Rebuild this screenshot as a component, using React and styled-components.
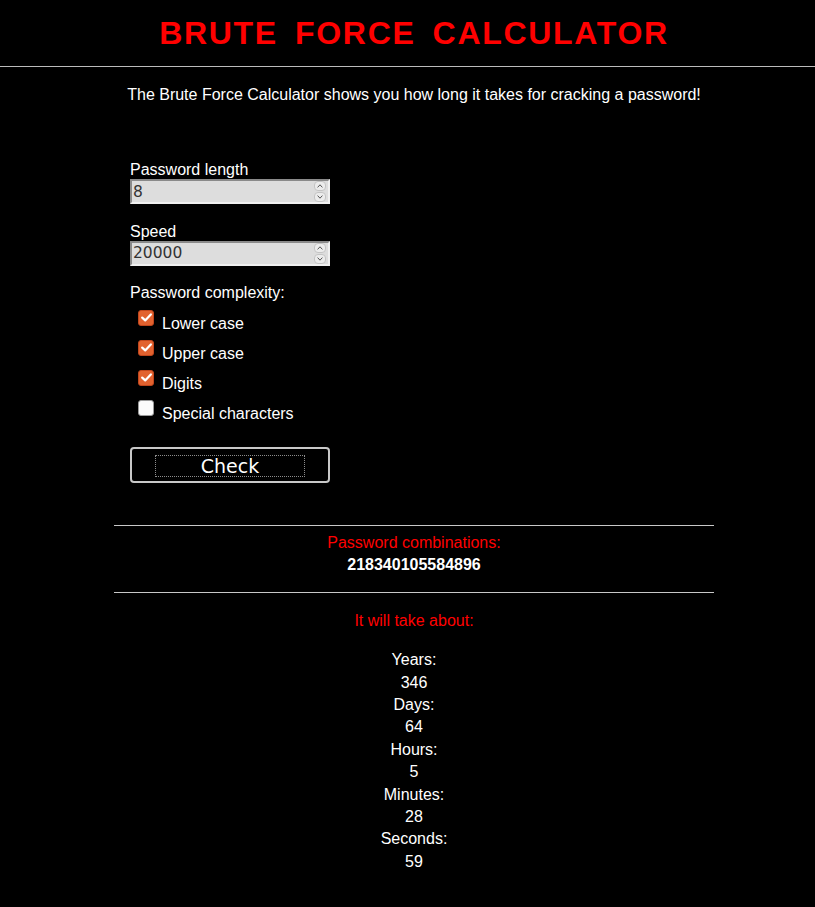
import React, { useState } from "react";
import styled, { createGlobalStyle } from "styled-components";

const GlobalStyle = createGlobalStyle`
  html, body {
    margin: 0;
    padding: 0;
    background: #000;
  }
  body {
    font-family: "Liberation Sans", Arial, sans-serif;
    font-size: 16px;
    color: #fff;
  }
`;

const Header = styled.header`
  padding: 13px 0 13px 13px;
  border-bottom: 1px solid #bbb;
`;

const Title = styled.h1`
  margin: 0;
  font-size: 32px;
  line-height: 40px;
  font-weight: bold;
  letter-spacing: 1.7px;
  word-spacing: 6.5px;
  color: #ff0000;
  text-align: center;
`;

const Page = styled.div`
  padding-left: 13px;
`;

const Container = styled.main`
  width: 600px;
  margin: 0 auto;
`;

const Intro = styled.p`
  margin: 19px 0 0;
  line-height: 18px;
  text-align: center;
`;

const Form = styled.form`
  padding: 57px 16px 0;
  display: flex;
  flex-direction: column;
  align-items: flex-start;
`;

const Field = styled.label`
  display: flex;
  flex-direction: column;
  line-height: 18px;
  margin-bottom: 18.5px;
`;

const NumberBox = styled.div`
  width: 200px;
  height: 25px;
  box-sizing: border-box;
  display: flex;
  align-items: center;
  background: #dddddd;
  border: 2px solid;
  border-color: #8a8a8a #f0f0f0 #f0f0f0 #8a8a8a;
`;

const NumberInput = styled.input`
  flex: 1;
  min-width: 0;
  border: 0;
  outline: none;
  background: transparent;
  font-family: "DejaVu Sans", sans-serif;
  font-size: 15.5px;
  color: #333;
  padding: 0 1px;
  height: 100%;
`;

const Spinner = styled.div`
  display: flex;
  flex-direction: column;
  gap: 1px;
  margin-right: 2px;
`;

const SpinButton = styled.span`
  width: 12px;
  height: 10px;
  box-sizing: border-box;
  border: 1px solid #c4c4c4;
  border-radius: 4px;
  background: #ececec;
  display: flex;
  align-items: center;
  justify-content: center;
`;

const GroupLabel = styled.div`
  line-height: 18px;
  margin-bottom: 4px;
`;

const OptionRow = styled.label`
  display: flex;
  align-items: flex-start;
  height: 30px;
  padding-left: 8px;
  cursor: pointer;
`;

const Box = styled.span`
  width: 16px;
  height: 16px;
  box-sizing: border-box;
  margin-top: 3.5px;
  margin-right: 8px;
  border-radius: 3px;
  border: 1px solid ${({ checked }) => (checked ? "#c0461c" : "#9a9a9a")};
  background: ${({ checked }) => (checked ? "#e2622f" : "#fbfbfb")};
  display: flex;
  align-items: center;
  justify-content: center;
`;

const OptionText = styled.span`
  padding-top: 9px;
  line-height: 18px;
`;

const CheckButton = styled.button`
  margin-top: 21px;
  width: 200px;
  height: 36px;
  box-sizing: border-box;
  background: #000;
  color: #fff;
  border: 2px solid #c8c8c8;
  border-radius: 4px;
  padding: 6px 0;
  font-family: "DejaVu Sans", sans-serif;
  font-size: 19px;
  display: flex;
  justify-content: center;
  cursor: pointer;
`;

const FocusRing = styled.span`
  width: 150px;
  height: 22px;
  box-sizing: border-box;
  border: 1px dotted #8c8c8c;
  line-height: 20px;
`;

const Divider = styled.hr`
  margin: ${({ top }) => top || "0"} 0 0;
  border: 0;
  border-top: 1px solid #c8c8c8;
`;

const Result = styled.section`
  text-align: center;
  line-height: 22.4px;
  padding: ${({ pad }) => pad || "6px 0 15px"};
`;

const Heading = styled.div`
  color: #ff0000;
  margin-bottom: ${({ gap }) => gap || "0"};
`;

const Total = styled.div`
  font-weight: bold;
`;

const Check = () => (
  <svg width="11" height="9" viewBox="0 0 11 9">
    <path d="M1.2 4.6 L4.2 7.4 L9.8 1.4" fill="none" stroke="#fff" strokeWidth="2.2" strokeLinecap="round" strokeLinejoin="round" />
  </svg>
);

const Chevron = ({ up }) => (
  <svg width="6" height="4" viewBox="0 0 6 4">
    <path d={up ? "M0.6 3.4 L3 0.8 L5.4 3.4" : "M0.6 0.6 L3 3.2 L5.4 0.6"} fill="none" stroke="#555" strokeWidth="1" />
  </svg>
);

const NumberField = ({ label, value, onChange }) => (
  <Field>
    {label}
    <NumberBox>
      <NumberInput type="text" value={value} onChange={(e) => onChange(e.target.value)} />
      <Spinner>
        <SpinButton>
          <Chevron up />
        </SpinButton>
        <SpinButton>
          <Chevron />
        </SpinButton>
      </Spinner>
    </NumberBox>
  </Field>
);

const OPTIONS = [
  { key: "lower", label: "Lower case" },
  { key: "upper", label: "Upper case" },
  { key: "digits", label: "Digits" },
  { key: "special", label: "Special characters" },
];

const TIMES = [
  ["Years", 346],
  ["Days", 64],
  ["Hours", 5],
  ["Minutes", 28],
  ["Seconds", 59],
];

export default function App() {
  const [length, setLength] = useState("8");
  const [speed, setSpeed] = useState("20000");
  const [checked, setChecked] = useState({ lower: true, upper: true, digits: true, special: false });

  const toggle = (key) => setChecked((c) => ({ ...c, [key]: !c[key] }));

  return (
    <>
      <GlobalStyle />
      <Header>
        <Title>BRUTE FORCE CALCULATOR</Title>
      </Header>
      <Page>
        <Container>
          <Intro>The Brute Force Calculator shows you how long it takes for cracking a password!</Intro>
          <Form onSubmit={(e) => e.preventDefault()}>
            <NumberField label="Password length" value={length} onChange={setLength} />
            <NumberField label="Speed" value={speed} onChange={setSpeed} />
            <GroupLabel>Password complexity:</GroupLabel>
            {OPTIONS.map((o) => (
              <OptionRow key={o.key} onClick={() => toggle(o.key)}>
                <Box checked={checked[o.key]}>{checked[o.key] && <Check />}</Box>
                <OptionText>{o.label}</OptionText>
              </OptionRow>
            ))}
            <CheckButton type="submit">
              <FocusRing>Check</FocusRing>
            </CheckButton>
          </Form>
          <Divider top="42px" />
          <Result>
            <Heading>Password combinations:</Heading>
            <Total>218340105584896</Total>
          </Result>
          <Divider />
          <Result pad="17px 0">
            <Heading gap="17px">It will take about:</Heading>
            {TIMES.map(([name, v]) => (
              <React.Fragment key={name}>
                <div>{name}:</div>
                <div>{v}</div>
              </React.Fragment>
            ))}
          </Result>
        </Container>
      </Page>
    </>
  );
}
